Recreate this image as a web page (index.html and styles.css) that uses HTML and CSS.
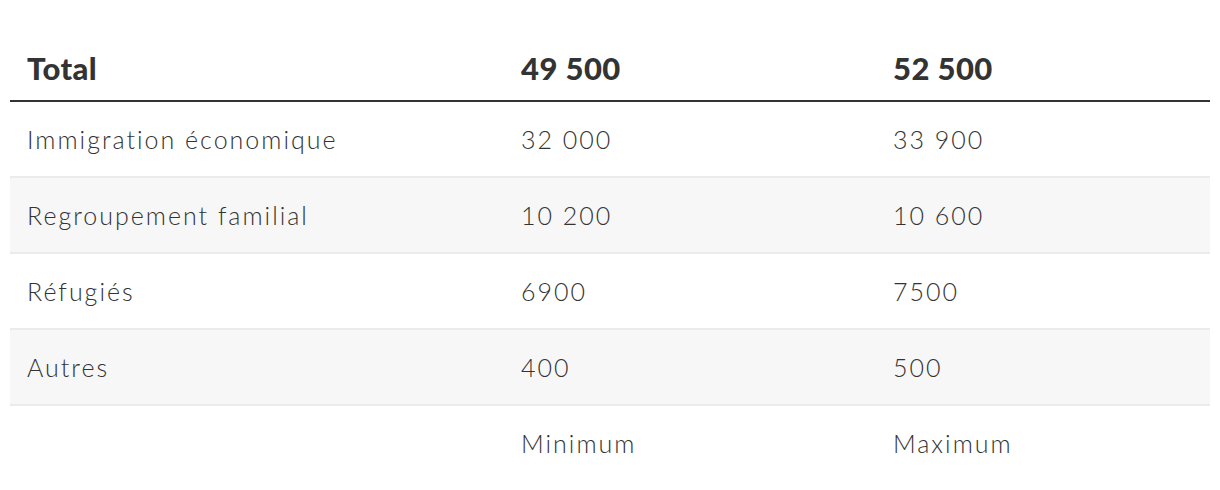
FILE: index.html
```html
<!DOCTYPE html>
<html lang="fr">
<head>
<meta charset="utf-8">
<link rel="stylesheet" href="styles.css">
</head>
<body>
<div class="table">
  <div class="row head">
    <div class="cell">Total</div>
    <div class="cell">49 500</div>
    <div class="cell">52 500</div>
  </div>
  <div class="row">
    <div class="cell">Immigration économique</div>
    <div class="cell">32 000</div>
    <div class="cell">33 900</div>
  </div>
  <div class="row alt">
    <div class="cell">Regroupement familial</div>
    <div class="cell">10 200</div>
    <div class="cell">10 600</div>
  </div>
  <div class="row">
    <div class="cell">Réfugiés</div>
    <div class="cell">6900</div>
    <div class="cell">7500</div>
  </div>
  <div class="row alt">
    <div class="cell">Autres</div>
    <div class="cell">400</div>
    <div class="cell">500</div>
  </div>
  <div class="row foot">
    <div class="cell"></div>
    <div class="cell">Minimum</div>
    <div class="cell">Maximum</div>
  </div>
</div>
</body>
</html>
```

FILE: styles.css
```css
html, body {
  margin: 0;
  padding: 0;
  background: #fff;
}
body {
  font-family: Lato, "Liberation Sans", sans-serif;
  color: #333;
  padding: 36px 10px 0;
}
.table {
  width: 1200px;
}
.row {
  display: grid;
  grid-template-columns: 494px 372px 334px;
  height: 74px;
  align-items: center;
  border-bottom: 2px solid #ebebeb;
  font-size: 25px;
  font-weight: 300;
  letter-spacing: 2px;
}
.row.alt {
  background: #f7f7f7;
}
.row.head {
  height: 64px;
  border-bottom: 2px solid #333;
  font-weight: 900;
  font-size: 31px;
  letter-spacing: 0.4px;
}
.row.foot {
  border-bottom: none;
}
.cell {
  padding-left: 17px;
}
```
